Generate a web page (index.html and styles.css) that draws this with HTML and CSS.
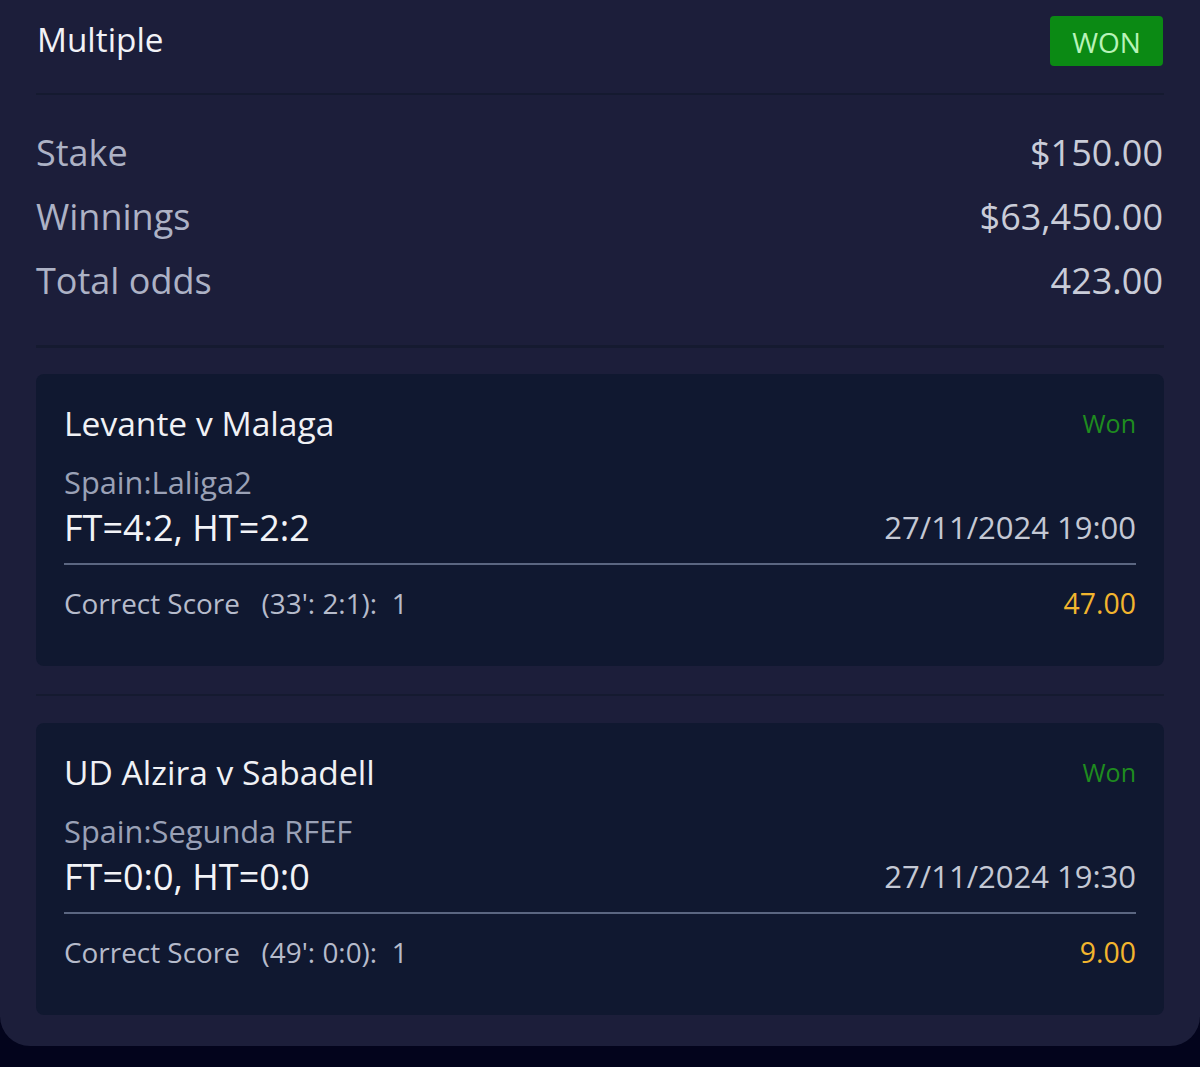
FILE: index.html
```html
<!DOCTYPE html>
<html>
<head>
<meta charset="utf-8">
<link rel="stylesheet" href="styles.css">
</head>
<body>
<div class="panel">
  <div class="header">
    <div class="title">Multiple</div>
    <div class="badge">WON</div>
  </div>
  <div class="divider"></div>
  <div class="stats">
    <div class="stat"><span class="label">Stake</span><span class="value">$150.00</span></div>
    <div class="stat"><span class="label">Winnings</span><span class="value">$63,450.00</span></div>
    <div class="stat"><span class="label">Total odds</span><span class="value">423.00</span></div>
  </div>
  <div class="divider thick"></div>
  <div class="card">
    <div class="row title-row"><span class="match">Levante v Malaga</span><span class="status">Won</span></div>
    <div class="league">Spain:Laliga2</div>
    <div class="row score-row"><span class="score">FT=4:2, HT=2:2</span><span class="date">27/11/2024 19:00</span></div>
    <div class="card-line"></div>
    <div class="row market-row"><span class="market">Correct Score&nbsp;&nbsp;&nbsp;(33': 2:1):&nbsp;&nbsp;1</span><span class="odds">47.00</span></div>
  </div>
  <div class="divider mid"></div>
  <div class="card">
    <div class="row title-row"><span class="match">UD Alzira v Sabadell</span><span class="status">Won</span></div>
    <div class="league">Spain:Segunda RFEF</div>
    <div class="row score-row"><span class="score">FT=0:0, HT=0:0</span><span class="date">27/11/2024 19:30</span></div>
    <div class="card-line"></div>
    <div class="row market-row"><span class="market">Correct Score&nbsp;&nbsp;&nbsp;(49': 0:0):&nbsp;&nbsp;1</span><span class="odds">9.00</span></div>
  </div>
</div>
</body>
</html>
```

FILE: styles.css
```css
* { box-sizing: border-box; }
html, body {
  margin: 0;
  padding: 0;
  background: #03041c;
  font-family: "Open Sans", "Noto Sans", sans-serif;
}
.panel {
  width: 1200px;
  height: 1046px;
  background: #1c1e3a;
  border-radius: 0 0 30px 30px;
  padding: 0 36px 31px;
}
.header {
  height: 93px;
  display: flex;
  justify-content: space-between;
  align-items: flex-start;
  padding-top: 16px;
}
.title {
  color: #f2f2f6;
  font-size: 33.3px;
  line-height: 50px;
  margin-top: -2px;
  padding-left: 1px;
}
.badge {
  width: 113px;
  height: 50px;
  margin-right: 1px;
  background: #0b8a14;
  border-radius: 4px;
  color: #b8f3b8;
  font-size: 28px;
  line-height: 52px;
  text-align: center;
}
.divider {
  height: 2px;
  background: #151a30;
}
.divider.thick {
  height: 3px;
  margin-bottom: 26px;
}
.divider.mid {
  margin: 28px 0 27px;
}
.stats {
  padding: 25px 0 33px;
}
.stat {
  display: flex;
  justify-content: space-between;
  align-items: center;
  height: 64px;
}
.label {
  color: #adb2c5;
  font-size: 36px;
}
.value {
  color: #c9ccd8;
  font-size: 36px;
  margin-right: 1px;
}
.card {
  height: 292px;
  background: #101830;
  border-radius: 8px;
  padding: 27px 28px 0;
}
.row {
  display: flex;
  justify-content: space-between;
  align-items: center;
}
.title-row {
  height: 44px;
}
.match {
  color: #f0f1f5;
  font-size: 33.6px;
}
.status {
  color: #1f8c1f;
  font-size: 25px;
}
.league {
  margin-top: 18px;
  height: 38px;
  line-height: 38px;
  color: #9aa1b6;
  font-size: 30.8px;
}
.score-row {
  margin-top: 3px;
  height: 46px;
}
.score {
  color: #f2f3f7;
  font-size: 36px;
}
.date {
  color: #c4c8d4;
  font-size: 31px;
}
.card-line {
  margin-top: 13px;
  height: 2px;
  background: #5b6681;
}
.market-row {
  margin-top: 18px;
  height: 40px;
}
.market {
  color: #b6bbcb;
  font-size: 27.9px;
}
.odds {
  color: #f2b52e;
  font-size: 28.4px;
}
```
